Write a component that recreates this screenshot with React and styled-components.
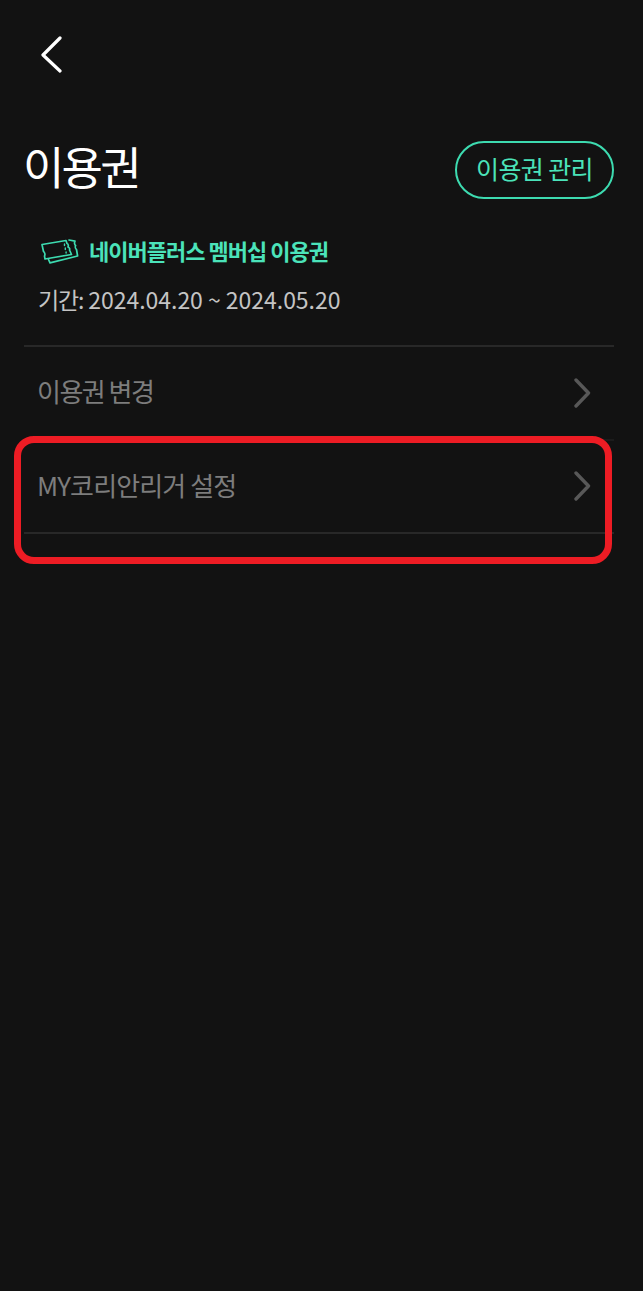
import React from 'react';
import styled, { createGlobalStyle } from 'styled-components';

const GlobalStyle = createGlobalStyle`
  html, body {
    margin: 0;
    padding: 0;
    background: #121212;
  }
  * {
    box-sizing: border-box;
  }
`;

const Page = styled.div`
  width: 643px;
  height: 1291px;
  padding: 0 29px 0 24px;
  background: #121212;
  font-family: 'Noto Sans CJK KR', 'Noto Sans', sans-serif;
  overflow: hidden;
`;

const Nav = styled.div`
  height: 141px;
  padding: 36px 0 0 16px;
`;

const BackIcon = styled.svg`
  display: block;
  width: 24px;
  height: 38px;
`;

const TitleRow = styled.div`
  display: flex;
  align-items: center;
  justify-content: space-between;
  height: 58px;
`;

const Title = styled.h1`
  margin: 0 0 8px -1px;
  font-size: 45px;
  font-weight: 400;
  letter-spacing: -2.8px;
  line-height: 50px;
  color: #ffffff;
`;

const ManageButton = styled.button`
  width: 159px;
  height: 58px;
  padding: 0 0 4px;
  border: 2px solid #3ddbb0;
  border-radius: 29px;
  background: transparent;
  font-family: inherit;
  font-size: 25px;
  letter-spacing: -0.6px;
  color: #4be3ba;
`;

const PassInfo = styled.div`
  height: 148px;
  padding: 37px 0 0 14px;
  border-bottom: 2px solid #282828;
`;

const PassName = styled.div`
  display: flex;
  align-items: center;
  gap: 9px;
  height: 30px;
  padding-left: 2px;
  font-size: 22px;
  font-weight: 700;
  letter-spacing: -1px;
  color: #4be3ba;
`;

const PassLabel = styled.span`
  margin-bottom: 2px;
`;

const Period = styled.div`
  margin-top: 17px;
  font-size: 23px;
  line-height: 32px;
  letter-spacing: -0.03px;
  color: #c4c4c4;
`;

const PeriodLabel = styled.span`
  letter-spacing: -1.2px;
`;

const MenuRow = styled.div`
  display: flex;
  align-items: center;
  justify-content: space-between;
  height: 93.5px;
  padding: 0 23px 0 14px;
  border-bottom: 2px solid ${props => (props.$last ? '#282828' : '#1c1c1c')};
  font-size: 26px;
  color: #7d7d7d;
`;

const MenuLabel = styled.span`
  margin: 0 0 4px -1px;
  letter-spacing: ${props => props.$spacing}px;
`;

const Chevron = styled.svg`
  width: 18px;
  height: 30px;
`;

const Highlight = styled.div`
  position: absolute;
  left: 14px;
  top: 436px;
  width: 598px;
  height: 128px;
  border: 7px solid #ed1c24;
  border-radius: 20px;
  pointer-events: none;
`;

const TicketIcon = () => (
  <svg width="40" height="26" viewBox="0 0 40 26" fill="none" stroke="#3ddbb0" strokeWidth="1.7" strokeLinejoin="round" strokeLinecap="round">
    <path d="M2 6.5 L26 2.5 L27 5.5 C28.5 6 28.5 8 28 9 C29.5 9.5 30 11 29.5 12 L31.5 16.5 L5 21 L4.5 18 C5.5 16.5 4.5 14 3.5 13.5 Z" />
    <path d="M29 2 L35 3.2 C34 5 34.8 7 35.6 7.5 C35 9 35.5 11 36.5 11.5 L37.6 18 L10 24.8 L8.5 21.5" />
    <path d="M24.5 6 v1.6 M25.3 10 v1.6 M26.1 14 v1" strokeWidth="1.4" />
  </svg>
);

const MenuItem = ({ label, spacing, last }) => (
  <MenuRow $last={last}>
    <MenuLabel $spacing={spacing}>{label}</MenuLabel>
    <Chevron viewBox="0 0 18 30" fill="none" stroke="#585858" strokeWidth="3.4" strokeLinecap="round" strokeLinejoin="round">
      <path d="M3 2 L15.5 15 L3 28" />
    </Chevron>
  </MenuRow>
);

export default function App() {
  return (
    <Page>
      <GlobalStyle />
      <Nav>
        <BackIcon viewBox="0 0 24 38" fill="none" stroke="#ffffff" strokeWidth="3.2" strokeLinecap="round" strokeLinejoin="round">
          <path d="M20 2 L3 19 L20 35" />
        </BackIcon>
      </Nav>
      <TitleRow>
        <Title>이용권</Title>
        <ManageButton>이용권 관리</ManageButton>
      </TitleRow>
      <PassInfo>
        <PassName>
          <TicketIcon />
          <PassLabel>네이버플러스 멤버십 이용권</PassLabel>
        </PassName>
        <Period>
          <PeriodLabel>기간:</PeriodLabel> 2024.04.20 ~ 2024.05.20
        </Period>
      </PassInfo>
      <MenuItem label="이용권 변경" spacing={-1.5} />
      <MenuItem label="MY코리안리거 설정" spacing={-0.9} last />
      <Highlight />
    </Page>
  );
}
